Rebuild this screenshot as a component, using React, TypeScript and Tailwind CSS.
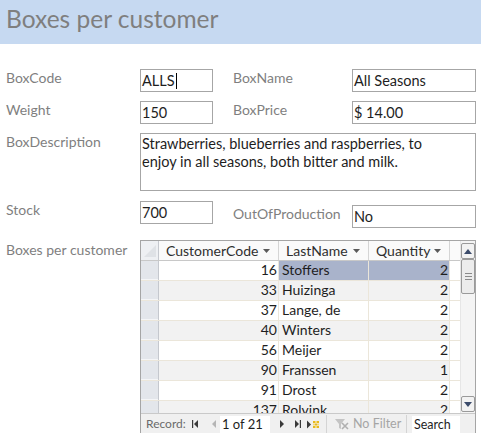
import React from 'react';

const rows = [
  { code: 16, name: 'Stoffers', qty: 2 },
  { code: 33, name: 'Huizinga', qty: 2 },
  { code: 37, name: 'Lange, de', qty: 2 },
  { code: 40, name: 'Winters', qty: 2 },
  { code: 56, name: 'Meijer', qty: 2 },
  { code: 90, name: 'Franssen', qty: 1 },
  { code: 91, name: 'Drost', qty: 2 },
  { code: 137, name: 'Rolvink', qty: 2 },
];

function Label({ children, className = '' }: { children: React.ReactNode; className?: string }) {
  return <div className={`text-[14px] leading-[18px] text-[#7f7f7f] ${className}`}>{children}</div>;
}

function Field({ children, className = '' }: { children: React.ReactNode; className?: string }) {
  return (
    <div className={`h-[23px] border border-[#a6a6a6] bg-white pl-[1px] pt-[2px] text-[14.5px] leading-[18px] text-[#1e1e1e] ${className}`}>
      {children}
    </div>
  );
}

function SortArrow() {
  return (
    <svg width="7" height="4" viewBox="0 0 7 4" className="shrink-0">
      <path d="M0 0h7L3.5 4z" fill="#5a5a5a" />
    </svg>
  );
}

function HeaderCell({ label, width }: { label: string; width: string }) {
  return (
    <div className={`${width} flex items-center justify-between border-r border-[#d5d5d5] pl-[7px] pr-[8px] text-[#2f2f2f]`}>
      <span>{label}</span>
      <SortArrow />
    </div>
  );
}

function Datasheet() {
  return (
    <div className="w-[336px] h-[195px] border border-[#a5a5a5] flex flex-col text-[14px] leading-[18px]">
      <div className="flex h-[173px] overflow-hidden">
        <div className="flex-1 overflow-hidden">
          {/* column headers */}
          <div className="flex h-[20px] border-b border-[#c8c8c8] bg-[#fafafa]">
            <div className="w-[18px] border-r border-[#c5c8ce] bg-[#eef0f3] relative">
              <svg width="12" height="12" viewBox="0 0 12 12" className="absolute right-[2px] bottom-[3px]">
                <path d="M12 0v12H0z" fill="#dfe2e6" />
              </svg>
            </div>
            <HeaderCell label="CustomerCode" width="w-[120px]" />
            <HeaderCell label="LastName" width="w-[90px]" />
            <HeaderCell label="Quantity" width="w-[81px]" />
            <div className="flex-1" />
          </div>
          {rows.map((r, i) => {
            const alt = i % 2 === 1;
            const sel = i === 0;
            return (
              <div key={r.code} className={`flex h-[20px] border-b border-[#ebe6da] ${alt ? 'bg-[#f2f2f2]' : 'bg-white'}`}>
                <div className="w-[18px] border-r border-[#c5c8ce] bg-[#e3e6eb] shadow-[inset_0_-1px_0_#f4f5f7]" />
                <div className="w-[120px] border-r border-[#ebe6da] pr-[1px] text-right text-[#1e1e1e]">{r.code}</div>
                <div className={`w-[90px] border-r border-[#ebe6da] pl-[3px] text-[#1e1e1e] ${sel ? 'bg-[#a9b3cb]' : ''}`}>{r.name}</div>
                <div className={`w-[81px] border-r border-[#ebe6da] pr-[1px] text-right text-[#1e1e1e] ${sel ? 'bg-[#a9b3cb]' : ''}`}>{r.qty}</div>
                <div className="flex-1 bg-white" />
              </div>
            );
          })}
        </div>
        {/* scrollbar */}
        <div className="w-[15px] bg-[#f4f4f4] border-l border-[#e6e6e6] flex flex-col items-center pt-[2px] pb-[1px]">
          <div className="w-[14px] h-[16px] rounded-[2px] border border-[#9a9a9a] bg-[#f2f2f2] flex items-center justify-center">
            <svg width="8" height="5" viewBox="0 0 8 5"><path d="M0 5h8L4 0z" fill="#3b4b6b" /></svg>
          </div>
          <div className="w-[14px] h-[35px] rounded-[2px] border border-[#9a9a9a] bg-[#ececec] flex flex-col items-center justify-center gap-[2px]">
            <div className="w-[7px] h-px bg-[#8a8a8a]" />
            <div className="w-[7px] h-px bg-[#8a8a8a]" />
            <div className="w-[7px] h-px bg-[#8a8a8a]" />
          </div>
          <div className="flex-1" />
          <div className="w-[14px] h-[16px] rounded-[2px] border border-[#9a9a9a] bg-[#f2f2f2] flex items-center justify-center">
            <svg width="8" height="5" viewBox="0 0 8 5"><path d="M0 0h8L4 5z" fill="#3b4b6b" /></svg>
          </div>
        </div>
      </div>
      {/* record navigation */}
      <div className="flex h-[21px] items-center border-t border-[#c9c9c9] bg-[#f0f0f0] text-[12px] leading-[16px] overflow-hidden">
        <span className="ml-[5px] w-[46px] shrink-0 text-[#6b6b6b]">Record:</span>
        <svg width="6" height="8" viewBox="0 0 6 8" className="mr-[14px] shrink-0">
          <rect x="0" y="0" width="1.2" height="8" fill="#3a3a3a" />
          <path d="M6 0v8L2 4z" fill="#3a3a3a" />
        </svg>
        <svg width="4" height="8" viewBox="0 0 4 8" className="mr-[4px] shrink-0">
          <path d="M4 0v8L0 4z" fill="#b5b5b5" />
        </svg>
        <div className="w-[50px] h-[17px] shrink-0 bg-white pl-[2px] text-[13px] leading-[17px] text-[#1e1e1e]">1 of 21</div>
        <svg width="4" height="8" viewBox="0 0 4 8" className="ml-[10px] shrink-0">
          <path d="M0 0v8l4-4z" fill="#3a3a3a" />
        </svg>
        <svg width="6" height="8" viewBox="0 0 6 8" className="ml-[11px] shrink-0">
          <path d="M0 0v8l4-4z" fill="#3a3a3a" />
          <rect x="4.8" y="0" width="1.2" height="8" fill="#3a3a3a" />
        </svg>
        <svg width="13" height="9" viewBox="0 0 13 9" className="ml-[6px] shrink-0">
          <path d="M0 0.5v8l4-4z" fill="#3a3a3a" />
          <rect x="6" y="1" width="2" height="2" fill="#e8b820" />
          <rect x="10" y="1" width="2" height="2" fill="#e8b820" />
          <rect x="8" y="3.5" width="2" height="2" fill="#e8b820" />
          <rect x="6" y="6" width="2" height="2" fill="#e8b820" />
          <rect x="10" y="6" width="2" height="2" fill="#e8b820" />
          <rect x="8" y="1" width="2" height="2" fill="#f3d97a" />
          <rect x="8" y="6" width="2" height="2" fill="#f3d97a" />
          <rect x="6" y="3.5" width="2" height="2" fill="#f3d97a" />
          <rect x="10" y="3.5" width="2" height="2" fill="#f3d97a" />
        </svg>
        <div className="ml-[6px] w-px h-[19px] shrink-0 bg-[#d4d4d4]" />
        <svg width="14" height="12" viewBox="0 0 14 12" className="ml-[8px] shrink-0">
          <path d="M0 1h10L6 6v5L4 10V6z" fill="#c4c4c4" />
          <path d="M7 5l6 6M13 5l-6 6" stroke="#b0b0b0" strokeWidth="1.6" />
        </svg>
        <span className="ml-[4px] w-[52px] shrink-0 whitespace-nowrap text-[12.5px] text-[#a5a5a5]">No Filter</span>
        <div className="ml-px w-px h-[19px] shrink-0 bg-[#d4d4d4]" />
        <div className="ml-[5px] w-[48px] h-[17px] shrink-0 bg-white pl-[2px] text-[12.5px] leading-[17px] text-[#1e1e1e]">Search</div>
      </div>
    </div>
  );
}

export default function App() {
  return (
    <div className="w-[481px] h-[433px] bg-white font-['Lato',sans-serif] overflow-hidden">
      <div className="h-[44px] bg-[#c6d9f1] pl-[6px] pt-[3px] text-[24.5px] leading-[32px] text-[#7f7f7f]">
        Boxes per customer
      </div>

      <div className="pl-[6px] pt-[25px]">
        <div className="flex">
          <Label className="w-[134px]">BoxCode</Label>
          <Field className="w-[73px] flex items-start">
            <span>ALLS</span>
            <span className="ml-px mt-[1px] w-px h-[16px] bg-black" />
          </Field>
          <Label className="ml-[20px] w-[119px]">BoxName</Label>
          <Field className="w-[124px]">All Seasons</Field>
        </div>

        <div className="flex mt-[9px]">
          <Label className="w-[134px]">Weight</Label>
          <Field className="w-[73px]">150</Field>
          <Label className="ml-[20px] w-[119px]">BoxPrice</Label>
          <Field className="w-[124px]">$ 14.00</Field>
        </div>

        <div className="flex mt-[9px]">
          <Label className="w-[134px]">BoxDescription</Label>
          <div className="w-[336px] h-[58px] border border-[#a6a6a6] pl-[1px] pt-[1px] text-[14.5px] leading-[18px] text-[#1e1e1e]">
            Strawberries, blueberries and raspberries, to
            <br />
            enjoy in all seasons, both bitter and milk.
          </div>
        </div>

        <div className="flex mt-[10px]">
          <Label className="w-[134px]">Stock</Label>
          <Field className="w-[73px]">700</Field>
          <Label className="ml-[20px] mt-[4px] w-[119px]">OutOfProduction</Label>
          <Field className="mt-[4px] w-[124px]">No</Field>
        </div>

        <div className="flex mt-[12px]">
          <Label className="w-[134px] pt-[1px]">Boxes per customer</Label>
          <Datasheet />
        </div>
      </div>
    </div>
  );
}
